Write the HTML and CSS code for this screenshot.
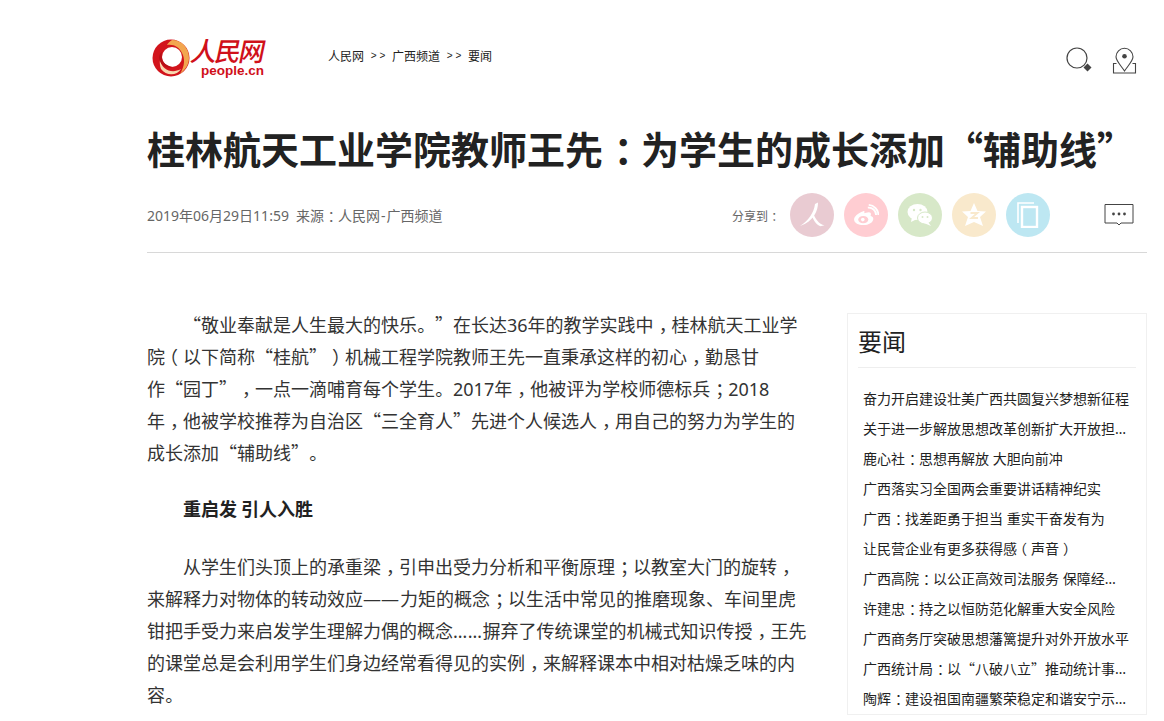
FILE: index.html
```html
<!DOCTYPE html>
<html lang="zh">
<head>
<meta charset="utf-8">
<title>桂林航天工业学院教师王先</title>
<link rel="stylesheet" href="styles.css">
</head>
<body>
<div class="page">
  <header class="top">
    <div class="logo">
      <svg class="logo-mark" width="38" height="40" viewBox="0 0 38 40">
        <circle cx="19" cy="20" r="18.5" fill="#d2141c"/>
        <path d="M20 2 C30 2 37 10 37 20 C37 27 33 32 28 36 C33 28 33 20 30 15 C27 9 22 6 15 7 C16 5 18 3 20 2Z" fill="#f2a64f"/>
        <circle cx="20" cy="19" r="10" fill="#fff"/>
        <path d="M8 22 C10 32 20 36 29 31 C25 38 14 38 9 31 C8 28 7.5 25 8 22Z" fill="#f7d9b0"/>
        <path d="M10 14 C8 22 13 28 21 29 C16 31 10 29 7.500 22 C6.500 18 8 15 10 14Z" fill="#b80f16"/>
      </svg>
      <div class="logo-text">
        <span class="logo-cn">人民网</span>
        <span class="logo-en">people.cn</span>
      </div>
    </div>
    <nav class="crumbs"><span>人民网</span><span class="sep">&gt; &gt;</span><span>广西频道</span><span class="sep">&gt; &gt;</span><span>要闻</span></nav>
    <div class="top-icons">
      <svg width="28" height="28" viewBox="0 0 28 28">
        <circle cx="12" cy="12" r="10" fill="none" stroke="#444" stroke-width="1.200"/>
        <path d="M22.500 17.500 L26.500 21.500 L22.500 25.500 L18.500 21.500Z" fill="#444"/>
      </svg>
      <svg width="26" height="28" viewBox="0 0 26 28">
        <path d="M12.500 25 C9 19.500 4 15 4 10.800 A8.500 8.500 0 0 1 21 10.800 C21 15 16 19.500 12.500 25Z" fill="none" stroke="#444" stroke-width="1.100"/>
        <circle cx="12.500" cy="10.300" r="2.300" fill="#444"/>
        <path d="M4.500 17.500 H1.500 V27 H23.500 V17.500 H20.500" fill="none" stroke="#444" stroke-width="1.100"/>
      </svg>
    </div>
  </header>

  <h1 class="title">桂林航天工业学院教师王先<span class="p">：</span>为学生的成长添加“辅助线”</h1>

  <div class="meta">
    <div class="meta-text"><span class="n">2019<span class="c">年</span>06<span class="c">月</span>29<span class="c">日</span>11:59</span><span>来源<span class="p">：</span>人民网<span class="n hy">-</span>广西频道</span></div>
    <div class="share">
      <span class="share-label">分享到<span class="p">：</span></span>
      <span class="dot dot-red">
        <svg width="44" height="44" viewBox="0 0 44 44"><path d="M25 11 L28 9.500 C28 18 24 28 10 33 C18 28 24 20 25 11Z M21.500 21 L23 19.500 C25 26 29 31 34.500 32.300 L30.500 33.300 C26 31.500 23 27 21.500 21Z" fill="#fff"/></svg>
      </span>
      <span class="dot dot-pink">
        <svg width="26" height="22" viewBox="0 0 28 24"><path d="M11 8 C5 10 1 14 1 17 C1 21 6 23 11 23 C17 23 22 20 22 16 C22 14 20 13 19 13 C20 10 19 9 17 9 C15 9 13 10 12 10 C13 8 12 7 11 8Z" fill="#fff"/><ellipse cx="11" cy="17" rx="5.500" ry="4" fill="#ffcdd2"/><circle cx="10.500" cy="17" r="2" fill="#fff"/><path d="M16 4 A8 8 0 0 1 25 12 M17 1 A11 11 0 0 1 27.500 12" fill="none" stroke="#fff" stroke-width="2"/></svg>
      </span>
      <span class="dot dot-green">
        <svg width="26" height="24" viewBox="0 0 26 24"><ellipse cx="10.500" cy="9" rx="10" ry="8" fill="#fff"/><path d="M5 14 L4 19 L10 16Z" fill="#fff"/><ellipse cx="18" cy="15" rx="7.500" ry="6" fill="#fff" stroke="#d7e8c8" stroke-width="1"/><path d="M21 19 L24 23 L17 20Z" fill="#fff"/><circle cx="7" cy="7" r="1.200" fill="#d7e8c8"/><circle cx="13.500" cy="7" r="1.200" fill="#d7e8c8"/><circle cx="15.500" cy="14" r="1" fill="#d7e8c8"/><circle cx="20.500" cy="14" r="1" fill="#d7e8c8"/></svg>
      </span>
      <span class="dot dot-yellow">
        <svg width="26" height="24" viewBox="0 0 26 24"><path d="M13 0 L16.500 8 L25 8.500 L19 14 L22 23 L13 19 L4 23 L7 14 L1 8.500 L9.500 8Z" fill="#fff"/><path d="M9.500 10 H16.500 L10.500 15 H17" fill="none" stroke="#f9e9cc" stroke-width="1.800"/></svg>
      </span>
      <span class="dot dot-blue">
        <svg width="22" height="26" viewBox="0 0 22 26"><path d="M1 21 V1 H17" fill="none" stroke="#fff" stroke-width="1.600"/><rect x="5" y="5" width="15" height="20" fill="none" stroke="#fff" stroke-width="2.400"/></svg>
      </span>
      <svg class="comment" width="30" height="24" viewBox="0 0 30 24"><path d="M1 1.500 H29 V20 H17 L15 22 L13 20 H1Z" fill="#fff" stroke="#444" stroke-width="1"/><circle cx="9.500" cy="11" r="1.400" fill="#444"/><circle cx="15" cy="11" r="1.400" fill="#444"/><circle cx="20.500" cy="11" r="1.400" fill="#444"/></svg>
    </div>
  </div>

  <div class="content">
    <article class="article">
      <p>“敬业奉献是人生最大的快乐<span class="pd">。</span>”在长达<span class="n">36</span>年的教学实践中<span class="p">，</span>桂林航天工业学<br>院<span class="po">（</span>以下简称“桂航”<span class="p">）</span>机械工程学院教师王先一直秉承这样的初心<span class="p">，</span>勤恳甘<br>作“园丁”<span class="p">，</span>一点一滴哺育每个学生<span class="pd">。</span><span class="n">2017</span>年<span class="p">，</span>他被评为学校师德标兵<span class="p">；</span><span class="n">2018</span><br>年<span class="p">，</span>他被学校推荐为自治区“三全育人”先进个人候选人<span class="p">，</span>用自己的努力为学生的<br>成长添加“辅助线”<span class="pd">。</span></p>
      <p class="bold">重启发 引人入胜</p>
      <p>从学生们头顶上的承重梁<span class="p">，</span>引申出受力分析和平衡原理<span class="p">；</span>以教室大门的旋转<span class="p">，</span><br>来解释力对物体的转动效应<span class="n dash">——</span>力矩的概念<span class="p">；</span>以生活中常见的推磨现象、车间里虎<br>钳把手受力来启发学生理解力偶的概念<span class="n dots">……</span>摒弃了传统课堂的机械式知识传授<span class="p">，</span>王先<br>的课堂总是会利用学生们身边经常看得见的实例<span class="p">，</span>来解释课本中相对枯燥乏味的内<br>容<span class="pd">。</span></p>
    </article>
    <aside class="side">
      <h2 class="side-title">要闻</h2>
      <ul class="side-list">
        <li>奋力开启建设壮美广西共圆复兴梦想新征程</li>
        <li>关于进一步解放思想改革创新扩大开放担当实干的意见</li>
        <li>鹿心社<span class="p">：</span>思想再解放 大胆向前冲</li>
        <li>广西落实习全国两会重要讲话精神纪实</li>
        <li>广西<span class="p">：</span>找差距勇于担当 重实干奋发有为</li>
        <li>让民营企业有更多获得感<span class="po">（</span>声音<span class="p">）</span></li>
        <li>广西高院<span class="p">：</span>以公正高效司法服务 保障经济发展</li>
        <li>许建忠<span class="p">：</span>持之以恒防范化解重大安全风险</li>
        <li>广西商务厅突破思想藩篱提升对外开放水平</li>
        <li>广西统计局<span class="p">：</span>以<span class="c">“</span>八破八立<span class="c">”</span>推动统计事业发展</li>
        <li>陶辉<span class="p">：</span>建设祖国南疆繁荣稳定和谐安宁示范区建设</li>
      </ul>
    </aside>
  </div>
</div>
</body>
</html>
```
FILE: styles.css
```css
* { box-sizing: border-box; }
html, body { margin: 0; padding: 0; background: #fff; overflow: hidden; height: 721px; }
body { font-family: "Noto Sans CJK SC", "Noto Sans", sans-serif; color: #222; text-spacing-trim: space-all; }
.page { width: 1000px; margin-left: 147px; }
.p, .po, .pd { display: inline-block; width: 1em; line-height: 1; text-indent: 0; }
.p { transform: translateX(.28em); }
.po { transform: translateX(-.28em); }
.pd { transform: translateX(.02em); }
.n { font-family: "Noto Sans", sans-serif; line-height: 1; }
.c { font-family: "Noto Sans CJK SC", sans-serif; line-height: 1; }
.dots { letter-spacing: .5px; }
.dash { margin-right: 1px; }
.hy { margin: 0 1px; }

.top { display: flex; align-items: flex-start; height: 123px; padding-top: 35px; }
.logo { display: flex; width: 176px; margin-left: 5px; height: 44px; align-items: flex-start; }
.logo-mark { margin-top: 3px; flex: none; }
.logo-text { display: flex; flex-direction: column; align-items: flex-end; width: 76px; }
.logo-cn { font-size: 26px; line-height: 29px; font-weight: 500; color: #d0101a; transform: skewX(-12deg); white-space: nowrap; width: 74px; letter-spacing: -2px; }
.logo-en { font-family: "Liberation Sans", sans-serif; font-size: 13.500px; line-height: 14px; font-weight: 700; color: #d0101a; white-space: nowrap; margin-right: 2px; }
.crumbs { display: flex; gap: 6px; font-size: 12px; line-height: 18px; color: #222; margin-top: 12px; }
.crumbs .sep { font-family: "Liberation Sans", sans-serif; font-size: 10px; letter-spacing: 0; width: 16px; text-align: center; }
.top-icons { margin-left: auto; display: flex; gap: 19px; margin-right: 9px; margin-top: 11px; }

.title { margin: 0; font-size: 38px; line-height: 50px; font-weight: 700; color: #222; white-space: nowrap; height: 50px; }

.meta { display: flex; justify-content: space-between; align-items: center; height: 80px; padding-bottom: 6px; padding-top: 11px; border-bottom: 1px solid #d8d8d8; }
.meta-text { display: flex; align-items: baseline; gap: 7px; font-size: 14px; color: #666; }
.share { display: flex; align-items: center; gap: 10px; padding-right: 13px; }
.share-label { font-size: 12px; color: #666; }
.dot { width: 44px; height: 44px; border-radius: 50%; display: flex; align-items: center; justify-content: center; }
.dot-red { background: #e9cbd2; }
.dot-pink { background: #ffcdd2; }
.dot-green { background: #d7e8c8; }
.dot-yellow { background: #f9e9cc; }
.dot-blue { background: #bde7f2; }
.comment { margin-left: 44px; }

.content { display: flex; justify-content: space-between; padding-top: 55px; align-items: flex-start; }
.article { width: 660px; font-size: 18px; line-height: 32px; color: #333; }
.article p { margin: 0 0 24px; text-indent: 36px; white-space: nowrap; }
.article p.bold { font-weight: 700; color: #222; margin-bottom: 26px; }

.side { width: 300px; margin-top: 5px; border: 1px solid #f0f0f0; padding: 9px 10px 0; }
.side-title { margin: 0; font-size: 24px; line-height: 36px; font-weight: 400; color: #222; height: 45px; border-bottom: 1px solid #eee; }
.side-list { list-style: none; margin: 16px 0 0; padding: 0; }
.side-list li { font-family: "Noto Sans", "Noto Sans CJK SC", sans-serif; font-size: 14px; line-height: 30px; height: 30px; padding: 0 7px 0 5px; color: #222; white-space: nowrap; overflow: hidden; text-overflow: ellipsis; }
```
